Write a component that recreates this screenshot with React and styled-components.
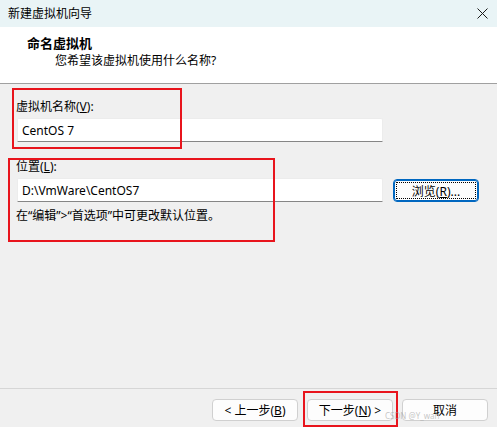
import React from 'react';
import styled, { createGlobalStyle } from 'styled-components';

const Global = createGlobalStyle`
    html, body {
        margin: 0;
        padding: 0;
        background: #f0f0f0;
    }
    body {
        font-family: "Segoe UI", "Noto Sans", "Noto Sans CJK SC", sans-serif;
        font-size: 12px;
        color: #000;
    }
`

const App = () => {
    return (
        <React.Fragment>
            <Global />
            <Window>
                <TitleBar>
                    <span>新建虚拟机向导</span>
                    <Close aria-label='close'>
                        <svg width='11' height='11' viewBox='0 0 11 11'>
                            <path d='M0.5 0.5 L10.5 10.5 M10.5 0.5 L0.5 10.5' stroke='#1a1a1a' strokeWidth='1' fill='none' />
                        </svg>
                    </Close>
                </TitleBar>
                <Header>
                    <Heading>命名虚拟机</Heading>
                    <Subtitle>您希望该虚拟机使用什么名称?</Subtitle>
                </Header>
                <Body>
                    <Label>虚拟机名称(<u>V</u>):</Label>
                    <Input defaultValue='CentOS 7' />
                    <Label top={17}>位置(<u>L</u>):</Label>
                    <Row>
                        <Input defaultValue='D:\VmWare\CentOS7' />
                        <Browse>浏览(<u>R</u>)...</Browse>
                    </Row>
                    <Hint>在“编辑”&gt;“首选项”中可更改默认位置。</Hint>
                </Body>
                <Footer>
                    <Button>&lt; 上一步(<u>B</u>)</Button>
                    <Button>下一步(<u>N</u>) &gt;</Button>
                    <Button>取消</Button>
                </Footer>

                <Mark left={12} top={88} width={170} height={61} />
                <Mark left={8} top={158} width={267} height={84} />
                <Mark left={303} top={391} width={95} height={36} />
                <Watermark>CSDN @Y_wan</Watermark>
            </Window>
        </React.Fragment>
    )
}

export default App;

const Window = styled.div`
    position: relative;
    width: 497px;
    height: 427px;
    display: flex;
    flex-direction: column;
    background: #f0f0f0;
    overflow: hidden;
`

const TitleBar = styled.div`
    height: 27px;
    flex: none;
    display: flex;
    align-items: center;
    justify-content: space-between;
    padding: 0 9px 0 8px;
    background: #e9f4f6;
    line-height: 16px;
`

const Close = styled.div`
    display: flex;
    align-items: center;
    margin-top: -1px;
`

const Header = styled.div`
    height: 57px;
    flex: none;
    box-sizing: border-box;
    padding-top: 7px;
    background: #fff;
    border-bottom: 1px solid #a0a0a0;
`

const Heading = styled.div`
    padding-left: 27px;
    font-size: 13px;
    font-weight: bold;
    line-height: 18px;
`

const Subtitle = styled.div`
    padding-left: 55px;
    line-height: 18px;
`

const Body = styled.div`
    flex: 1;
    display: flex;
    flex-direction: column;
    padding: 15px 0 0 16px;
`

const Label = styled.div`
    line-height: 16px;
    margin-top: ${p => p.top || 0}px;
    margin-bottom: 3px;
`

const Input = styled.input`
    width: 366px;
    height: 24px;
    box-sizing: border-box;
    margin: 0 0 0 1px;
    padding: 0 4px;
    border: 1px solid #ececec;
    border-bottom: 1px solid #868686;
    border-radius: 2px 2px 0 0;
    background: #fff;
    font: inherit;
    color: #000;
    outline: none;
`

const Row = styled.div`
    display: flex;
    align-items: center;
    gap: 10px;
`

const Browse = styled.button`
    position: relative;
    width: 86px;
    height: 23px;
    margin-top: 1px;
    box-sizing: border-box;
    border: 1px solid #0067c0;
    box-shadow: inset 0 0 0 1px #0067c0;
    border-radius: 4px;
    background: #fdfdfd;
    font: inherit;
    color: #000;
    padding: 0;

    &::after {
        content: '';
        position: absolute;
        inset: 2px;
        border: 1px dotted #000;
        border-radius: 1px;
    }
`

const Hint = styled.div`
    margin-top: 6px;
    line-height: 16px;
`

const Footer = styled.div`
    height: 39px;
    flex: none;
    display: flex;
    justify-content: flex-end;
    gap: 9px;
    padding: 10px 9px 0 0;
    box-sizing: border-box;
    border-top: 1px solid #d6d6d6;
`

const Button = styled.button`
    width: 86px;
    height: 22px;
    box-sizing: border-box;
    border: 1px solid #d0d0d0;
    border-radius: 4px;
    background: #fdfdfd;
    font: inherit;
    color: #000;
    padding: 0;
`

const Mark = styled.div`
    position: absolute;
    left: ${p => p.left}px;
    top: ${p => p.top}px;
    width: ${p => p.width}px;
    height: ${p => p.height}px;
    box-sizing: border-box;
    border: 2px solid #e8141c;
    pointer-events: none;
`

const Watermark = styled.div`
    position: absolute;
    left: 385px;
    top: 410px;
    font-size: 8px;
    line-height: 11px;
    color: rgba(160, 160, 160, 0.6);
    pointer-events: none;
`
